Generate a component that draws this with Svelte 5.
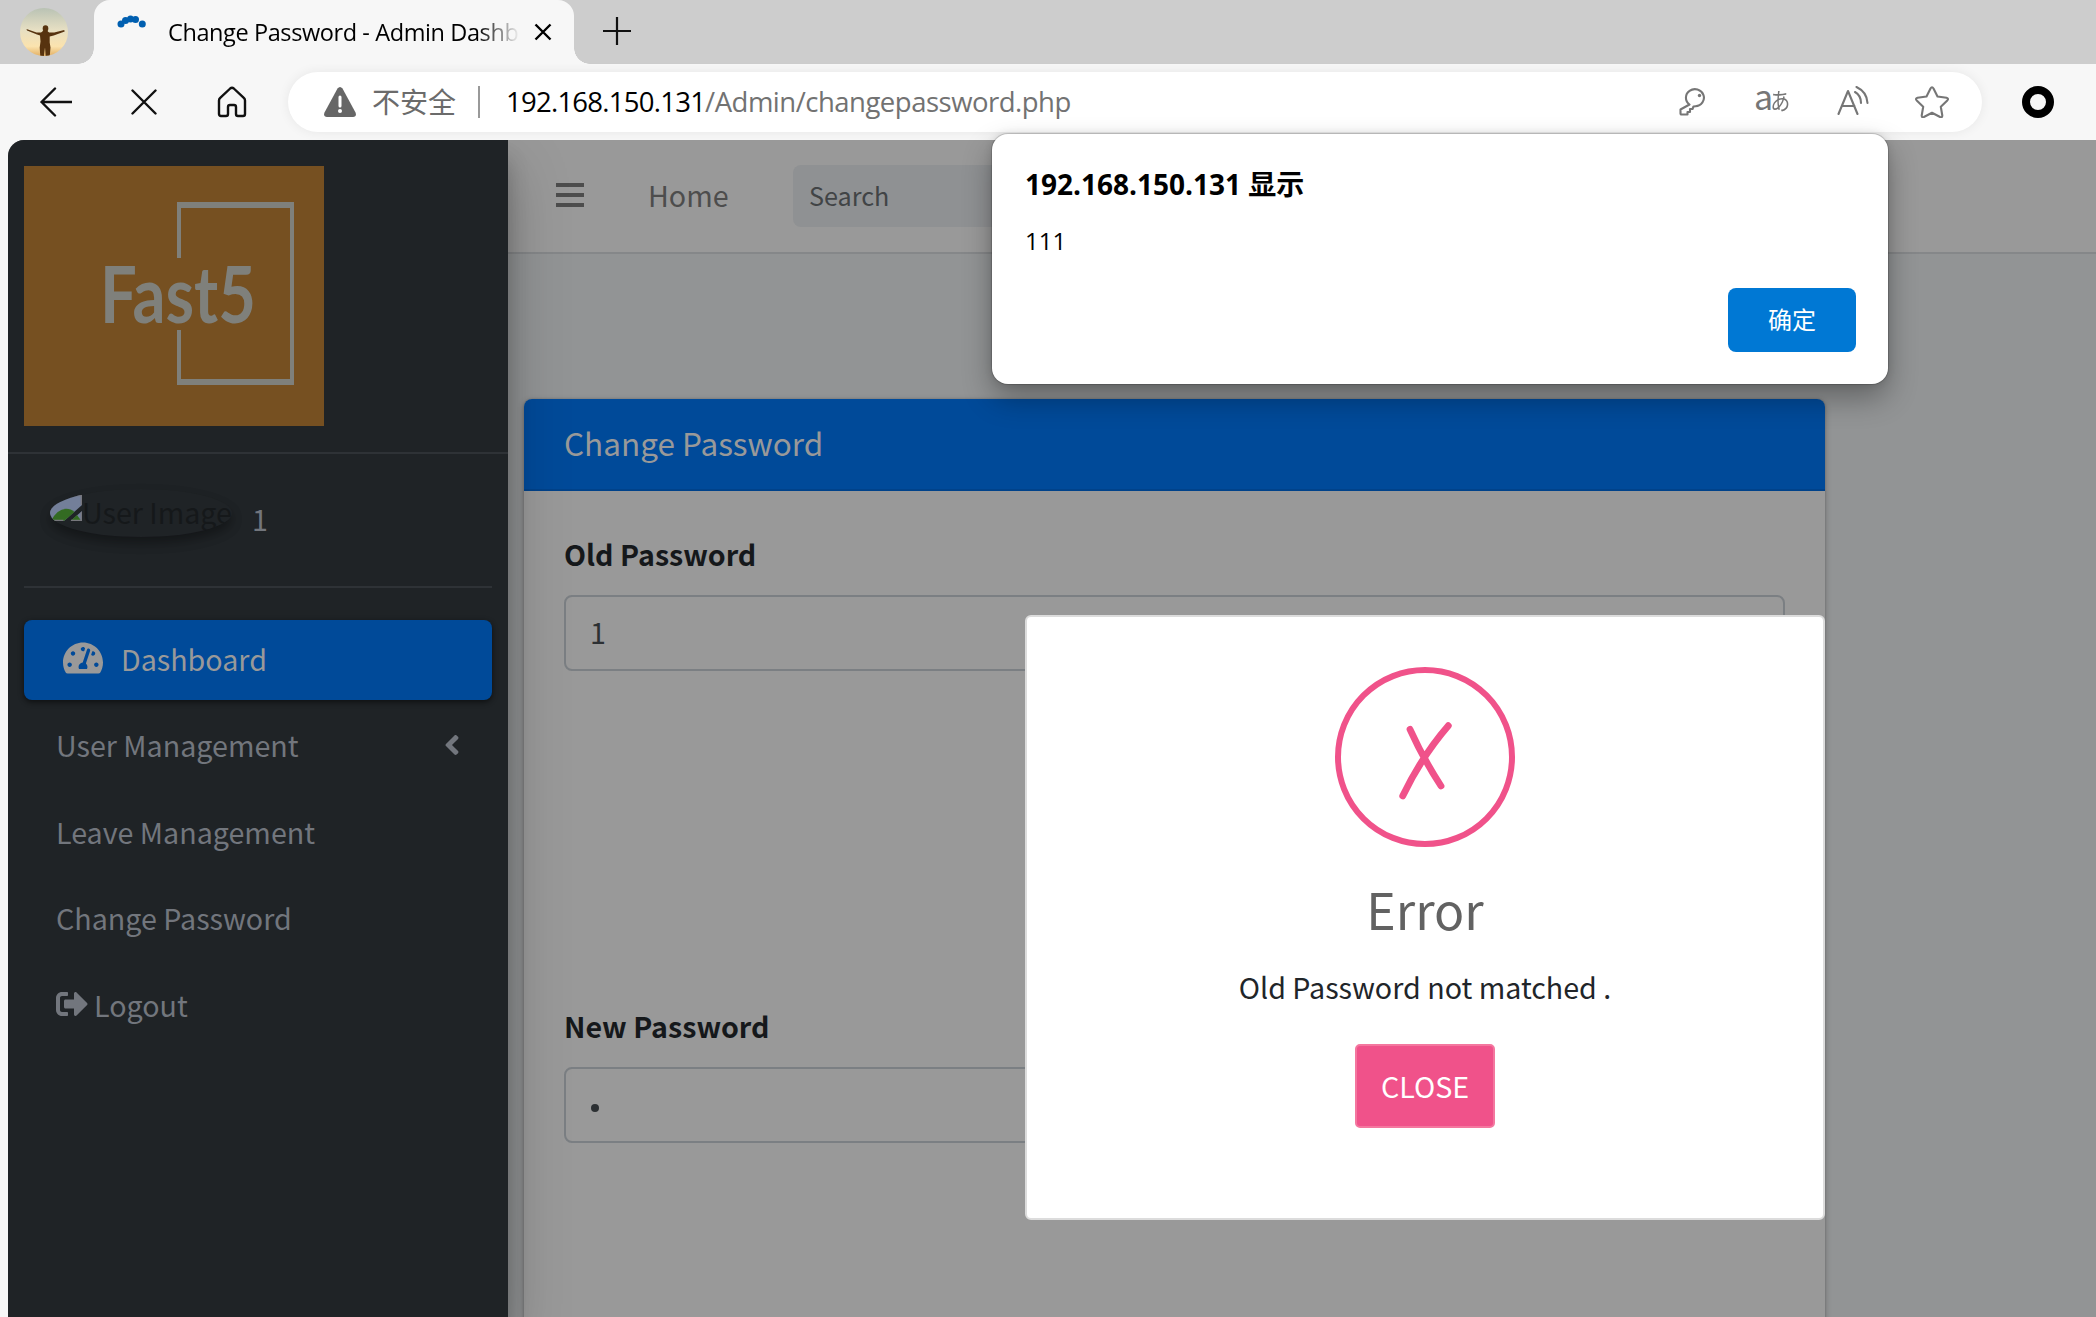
<script>
  const links = ['User Management', 'Leave Management', 'Change Password'];
  const spinner = [[7, 11], [11.5, 7.5], [16.5, 6], [21.5, 6.6], [28.3, 11]];
</script>

<div class="window">
  <header class="tabs">
    <svg class="avatar" viewBox="0 0 48 48">
      <defs>
        <linearGradient id="sky" x1="0" y1="0" x2="0" y2="1">
          <stop offset="0" stop-color="#b9c2b4" />
          <stop offset=".45" stop-color="#e6dfc3" />
          <stop offset=".8" stop-color="#fbe3ae" />
          <stop offset="1" stop-color="#e3b064" />
        </linearGradient>
        <clipPath id="round"><circle cx="24" cy="24" r="24" /></clipPath>
      </defs>
      <g clip-path="url(#round)">
        <rect width="48" height="48" fill="url(#sky)" />
        <path d="M6.500 21l10 3.500h4.500c1-.8 2-1.300 2.200-2.200h4c.2.900 1 1.400 2 2.200h5l10-2.500.5 1.500-11 4-4 1v6l.8 5-.8 9h-4l-.7-9-1.200 9h-3.500l-.6-9 .8-6-.5-6-3-1-10-4z" fill="#57330f" />
        <ellipse cx="25.500" cy="20.500" rx="2.800" ry="3.200" fill="#57330f" />
      </g>
    </svg>
    <div class="tab">
      <svg class="spin" viewBox="0 0 36 36">
        {#each spinner as [x, y]}<circle cx={x} cy={y} r="3.500" fill="#005fb0" />{/each}
      </svg>
      <span class="tab-title">Change Password - Admin Dashb</span>
      <svg class="tab-close" viewBox="0 0 18 18"><path d="M1.500 1.500l15 15M16.500 1.500l-15 15" /></svg>
    </div>
    <svg class="plus" viewBox="0 0 28 28"><path d="M14 0v28M0 14h28" /></svg>
  </header>

  <div class="toolbar">
    <svg class="tool back" viewBox="0 0 32 30"><path d="M32 15H1.500M15 1.500L1.500 15 15 28.500" /></svg>
    <svg class="tool stop" viewBox="0 0 26 26"><path d="M1.500 1.500l23 23M24.500 1.500l-23 23" /></svg>
    <svg class="tool house" viewBox="0 0 30 32"><path d="M2 14.500q0-1.500 1.200-2.600L13.200 2.500q1.800-1.600 3.600 0l10 9.400Q28 13 28 14.500V28q0 2-2 2h-5q-2 0-2-2v-7q0-2-2-2h-4q-2 0-2 2v7q0 2-2 2H4q-2 0-2-2z" /></svg>
    <div class="address">
      <svg class="warn" viewBox="0 0 32 30">
        <path d="M13.500 1.500q2.500-3 5 0l13 24q1.500 4-2.500 4.500H3q-4-.5-2.500-4.500z" fill="#666" />
        <path d="M16 10v9" stroke="#fff" stroke-width="3" stroke-linecap="round" />
        <circle cx="16" cy="24" r="2" fill="#fff" />
      </svg>
      <span class="insecure">不安全</span>
      <span class="bar"></span>
      <span class="url"><b>192.168.150.131</b>/Admin/changepassword.php</span>
      <svg class="key" viewBox="0 0 28 28"><path d="M10.500 16.500A9 8.500 0 1 1 16.500 18.200l-2 .3-1 2.500h-2.500v3H8.500v2.500H2.500q-1 0-1-1v-4z" /><circle cx="20.500" cy="7.500" r="1.700" class="dot" /></svg>
      <span class="translate"><span>a</span><span class="kana">あ</span></span>
      <svg class="read" viewBox="0 0 32 30"><path d="M1.500 28L11 5l9.500 23M5 20h12.500M18 6q6 3.500 6 11M19.500 1Q30 6 30.500 17" /></svg>
      <svg class="star" viewBox="0 0 34 32"><path d="M15.500 2.500q1.500-2.500 3 0l4 8 9 1.300q2.500.7.800 2.600l-6.500 6.300 1.500 8.800q0 2.300-2.200 1.500L17 26.800 8.900 31q-2.200.8-2.200-1.500l1.500-8.800-6.500-6.300q-1.700-1.900.8-2.600l9-1.300z" /></svg>
    </div>
    <span class="ring"></span>
  </div>

  <main class="page">
    <aside class="sidebar">
      <div class="brand">
        <svg class="logo" viewBox="0 0 300 260">
          <rect width="300" height="260" fill="#765021" />
          <path d="M153 92V36h117v183H153v-55h4v49h109V42H157v50z" fill="#7f807b" />
          <text x="76" y="157" textLength="156" lengthAdjust="spacingAndGlyphs">Fast5</text>
        </svg>
      </div>
      <div class="user">
        <div class="photo">
          <svg viewBox="0 0 32 32">
            <path d="M0 6h32v10L14 32H0z" fill="#737f99" />
            <path d="M1 32q6-12 15-12.300 5 0 8.500 3.300L14 32z" fill="#336b22" />
            <path d="M32 22v10H20.500z" fill="#737f99" />
            <path d="M27 26l4 5.500H21z" fill="#336b22" />
            <path d="M18 6.500h13.300V16M31.300 23v8.500H21M13.500 31.500H2" fill="none" stroke="#77777c" stroke-width="1.300" />
          </svg>
          <span>User Image</span>
        </div>
        <span class="name">1</span>
      </div>
      <nav>
        <a class="active" href="#dashboard">
          <svg class="tach" viewBox="0 0 576 512"><path d="M288 32C128.940 32 0 160.940 0 320c0 52.800 14.250 102.260 39.060 144.800 5.610 9.620 16.300 15.200 27.440 15.200h443c11.140 0 21.830-5.580 27.440-15.200C561.750 422.260 576 372.800 576 320c0-159.060-128.940-288-288-288zm0 64c14.710 0 26.580 10.130 30.320 23.650-1.110 2.260-2.640 4.230-3.450 6.670l-9.220 27.670c-5.130 3.490-10.970 6.010-17.640 6.010-17.670 0-32-14.330-32-32S270.330 96 288 96zM96 384c-17.670 0-32-14.330-32-32s14.330-32 32-32 32 14.330 32 32-14.330 32-32 32zm48-160c-17.670 0-32-14.330-32-32s14.330-32 32-32 32 14.330 32 32-14.330 32-32 32zm246.770-72.410l-61.330 184C343.130 347.330 352 364.540 352 384c0 11.720-3.380 22.550-8.880 32H232.880c-5.500-9.450-8.880-20.280-8.880-32 0-33.940 26.500-61.430 59.900-63.590l61.340-184.010c4.170-12.560 17.730-19.450 30.360-15.170 12.570 4.190 19.350 17.790 15.170 30.360zm14.660 57.200l15.520-46.550c3.470-1.290 7.130-2.230 11.050-2.230 17.670 0 32 14.330 32 32s-14.330 32-32 32c-11.380-.01-20.890-6.280-26.570-15.220zM480 384c-17.670 0-32-14.330-32-32s14.330-32 32-32 32 14.330 32 32-14.330 32-32 32z" /></svg>
          <span>Dashboard</span>
        </a>
        {#each links as label, i}
          <a href="#{i}">
            <span>{label}</span>
            {#if i === 0}
              <svg class="angle" viewBox="0 0 256 512"><path d="M31.700 239l136-136c9.400-9.400 24.600-9.400 33.900 0l22.600 22.600c9.400 9.400 9.400 24.600 0 33.900L127.900 256l96.400 96.400c9.400 9.400 9.400 24.600 0 33.900L201.700 409c-9.400 9.400-24.600 9.400-33.900 0l-136-136c-9.500-9.400-9.500-24.600-.1-34z" /></svg>
            {/if}
          </a>
        {/each}
        <a href="#logout">
          <svg class="exit" viewBox="0 0 512 512"><path d="M497 273L329 441c-15 15-41 4.500-41-17v-96H152c-13.300 0-24-10.700-24-24v-96c0-13.300 10.700-24 24-24h136V88c0-21.400 25.900-32 41-17l168 168c9.300 9.400 9.300 24.600 0 34zM192 436v-40c0-6.600-5.400-12-12-12H96c-17.700 0-32-14.300-32-32V160c0-17.700 14.300-32 32-32h84c6.600 0 12-5.400 12-12V76c0-6.600-5.400-12-12-12H96c-53 0-96 43-96 96v192c0 53 43 96 96 96h84c6.600 0 12-5.400 12-12z" /></svg>
          <span>Logout</span>
        </a>
      </nav>
    </aside>

    <section class="content">
      <div class="topnav">
        <span class="burger"><i></i><i></i><i></i></span>
        <span class="home">Home</span>
        <span class="search">Search</span>
      </div>
      <div class="card">
        <div class="card-head">Change Password</div>
        <div class="card-body">
          <div class="field">
            <label for="old">Old Password</label>
            <div class="input" id="old"><span>1</span></div>
          </div>
          <div class="field">
            <label for="new">New Password</label>
            <div class="input" id="new"><span class="bullet"></span></div>
          </div>
        </div>
      </div>
    </section>
  </main>

  <div class="error">
    <svg class="cross" viewBox="0 0 180 180">
      <circle cx="90" cy="90" r="87" />
      <path d="M75 62.300Q89 93 106 119M113.300 58.700Q87 89 67.700 129" />
    </svg>
    <h2>Error</h2>
    <p>Old Password not matched .</p>
    <button>CLOSE</button>
  </div>

  <div class="alert">
    <strong>192.168.150.131 显示</strong>
    <span class="msg">111</span>
    <button>确定</button>
  </div>
</div>

<style>
  :global(body) { margin: 0; }
  * { box-sizing: border-box; }
  svg { display: block; flex: none; }
  .window {
    position: relative;
    width: 2096px;
    height: 1317px;
    overflow: hidden;
    display: flex;
    flex-direction: column;
    background: #f7f7f7;
    font-family: "Noto Sans CJK SC", sans-serif;
  }
  .tabs { height: 64px; flex: none; display: flex; align-items: center; background: #cdcdcd; }
  .avatar { width: 48px; height: 48px; margin: 0 26px 0 20px; }
  .tab {
    position: relative;
    width: 480px;
    height: 64px;
    display: flex;
    align-items: center;
    background: #f7f7f7;
    border-radius: 16px 16px 0 0;
    font: 24px/36px "Open Sans", sans-serif;
  }
  .tab::before, .tab::after {
    content: "";
    position: absolute;
    bottom: 0;
    width: 16px;
    height: 16px;
  }
  .tab::before { left: -16px; background: radial-gradient(circle at 0 0, transparent 15.500px, #f7f7f7 16px); }
  .tab::after { right: -16px; background: radial-gradient(circle at 100% 0, transparent 15.500px, #f7f7f7 16px); }
  .spin { width: 36px; height: 36px; margin: 0 18px 0 20px; align-self: flex-start; margin-top: 13px; }
  .tab-title {
    width: 352px;
    white-space: nowrap;
    font-size: 23.500px;
    letter-spacing: -.4px;
    -webkit-mask-image: linear-gradient(90deg, #000 310px, transparent 352px);
    mask-image: linear-gradient(90deg, #000 310px, transparent 352px);
  }
  .tab-close { width: 18px; height: 18px; margin-left: 14px; stroke: #000; stroke-width: 2.400; }
  .plus { width: 28px; height: 28px; margin: 0 0 2px 29px; stroke: #111; stroke-width: 2.200; }
  .toolbar { height: 76px; flex: none; display: flex; align-items: center; }
  .tool { fill: none; stroke: #111; stroke-width: 2.400; stroke-linecap: round; stroke-linejoin: round; }
  .back { width: 32px; height: 30px; margin-left: 40px; }
  .stop { width: 26px; height: 26px; margin-left: 59px; }
  .house { width: 30px; height: 32px; margin-left: 60px; }
  .address {
    width: 1694px;
    height: 60px;
    margin-left: 41px;
    display: flex;
    align-items: center;
    border-radius: 30px;
    background: #fff;
    box-shadow: 0 0 12px rgba(0, 0, 0, .07);
    color: #6b6b6b;
  }
  .warn { width: 32px; height: 30px; margin-left: 36px; }
  .insecure { width: 86px; margin: 0 20px 2px 16px; font-size: 28px; line-height: 40px; }
  .bar { width: 2px; height: 32px; background: #999; }
  .url { width: 1173px; padding-left: 26px; font: 27.500px/40px "Open Sans", sans-serif; letter-spacing: -.5px; white-space: nowrap; color: #727272; }
  .url b { font-weight: 400; color: #000; letter-spacing: -.75px; }
  .key, .read, .star { fill: none; stroke: #767676; stroke-width: 2.100; stroke-linejoin: round; stroke-linecap: round; }
  .key { width: 28px; height: 28px; margin-left: 26px; }
  .key .dot { fill: #767676; stroke: none; }
  .translate { width: 36px; margin-left: 47px; margin-right: 1px; display: flex; align-items: baseline; font-size: 34px; line-height: 30px; padding-bottom: 6px; color: #767676; }
  .translate .kana { font-size: 20px; margin-left: -3px; transform: scaleY(1.200); transform-origin: 50% 75%; }
  .read { width: 32px; height: 30px; margin-left: 46px; margin-bottom: 3px; }
  .star { width: 34px; height: 32px; margin-left: 46px; }
  .ring { width: 32px; height: 32px; margin-left: 40px; border: 8px solid #000; border-radius: 50%; }

  .page {
    flex: 1;
    min-height: 0;
    margin-left: 8px;
    display: flex;
    overflow: hidden;
    border-radius: 16px 0 0 0;
    background: #929495;
    font-size: 28.650px;
  }
  .sidebar {
    position: relative;
    z-index: 1;
    width: 500px;
    flex: none;
    background: #1f2326;
    color: #72767d;
    box-shadow: 0 28px 56px rgba(0, 0, 0, .25), 0 20px 20px rgba(0, 0, 0, .2);
  }
  .brand { height: 314px; padding: 26px 16px 0; border-bottom: 2px solid #2e3236; }
  .logo { width: 300px; height: 260px; }
  .logo text { font: 700 78px Lato, sans-serif; fill: #7f807b; }
  .user { height: 134px; margin: 0 16px; padding: 35px 0 0 26px; display: flex; border-bottom: 2px solid #2e3236; }
  .photo {
    width: 182px;
    height: 48px;
    display: flex;
    overflow: hidden;
    border-radius: 50%;
    background: #1f2326;
    box-shadow: 0 6px 12px rgba(0, 0, 0, .18), 0 6px 12px rgba(0, 0, 0, .22);
    color: #15181a;
    line-height: 46px;
    white-space: nowrap;
  }
  .photo svg { width: 32px; height: 32px; }
  .name { margin-left: 20px; line-height: 59px; }
  nav { padding: 32px 16px 0; display: flex; flex-direction: column; gap: 6.400px; }
  nav a {
    height: 80px;
    padding: 0 32px 3px;
    display: flex;
    align-items: center;
    border-radius: 8px;
    color: #72767d;
    text-decoration: none;
    white-space: nowrap;
  }
  nav svg { fill: currentColor; }
  nav .active { padding-left: 39px; padding-bottom: 4px; background: #004a99; color: #999; box-shadow: 0 2px 6px rgba(0, 0, 0, .3), 0 2px 4px rgba(0, 0, 0, .3); }
  .tach { width: 40px; height: 36px; margin-right: 18px; }
  .angle { width: 16px; height: 32px; margin-left: auto; }
  .exit { width: 32px; height: 32px; margin-right: 6px; }

  .content { flex: 1; min-width: 0; }
  .topnav { height: 114px; display: flex; align-items: center; background: #999; border-bottom: 2px solid #858789; color: #4d4d4d; }
  .burger { width: 28px; margin: 0 0 2px 48px; display: flex; flex-direction: column; gap: 6px; }
  .burger i { height: 4px; background: #4d4d4d; }
  .home { width: 145px; margin-left: 64px; padding-bottom: 3px; }
  .search { width: 500px; height: 62px; padding-left: 16px; border-radius: 8px; background: #8f9193; color: #414446; font-size: 25.200px; line-height: 60px; }
  .card { width: 1301px; height: 1000px; margin: 145px 0 0 16px; border-radius: 8px; background: #999; box-shadow: 0 0 2px rgba(0, 0, 0, .2), 0 2px 6px rgba(0, 0, 0, .25); }
  .card-head { height: 92px; padding: 0 40px; border-bottom: 2px solid #00428a; border-radius: 8px 8px 0 0; background: #004a99; color: #999; font-size: 31.500px; line-height: 86px; }
  .card-body { padding: 40px; color: #15181b; }
  .field { height: 472px; }
  .field label { display: block; height: 64px; font-weight: 700; line-height: 46px; }
  .input { height: 76px; padding: 0 24px; border: 2px solid #7b7f83; border-radius: 8px; display: flex; align-items: center; color: #2c3033; line-height: 70px; }
  .input span { margin-top: -2px; }
  .input .bullet { width: 8px; height: 8px; margin: 5px 0 0 1px; border-radius: 50%; background: #2c3033; }

  .error {
    position: absolute;
    left: 1025px;
    top: 615px;
    width: 800px;
    height: 605px;
    padding-top: 50px;
    display: flex;
    flex-direction: column;
    align-items: center;
    border: 2px solid #dcdcdc;
    border-radius: 6px;
    background: #fff;
    font-size: 28.650px;
  }
  .cross { width: 180px; height: 180px; fill: none; stroke: #f0528a; stroke-width: 6; stroke-linecap: round; }
  .cross path { stroke-width: 6.800; }
  h2 { margin: 25px 0 0; font-size: 50px; font-weight: 400; line-height: 72px; color: #626262; }
  p { margin: 19px 0 0; line-height: 48px; color: #212529; }
  .error button {
    width: 140px;
    height: 84px;
    margin-top: 33px;
    padding: 0 0 2px;
    border: 2px solid #f4779f;
    border-radius: 5px;
    background: #f0528a;
    color: #fff;
    font: inherit;
  }
  .alert {
    position: absolute;
    left: 992px;
    top: 134px;
    width: 896px;
    height: 250px;
    padding: 32px 32px;
    display: flex;
    flex-direction: column;
    border-radius: 16px;
    background: #fff;
    box-shadow: 0 0 0 1px rgba(0, 0, 0, .14), 0 14px 30px rgba(0, 0, 0, .32), 0 0 8px rgba(0, 0, 0, .12);
    font-family: "Open Sans", "Noto Sans CJK SC", sans-serif;
    color: #000;
  }
  .alert strong { margin-left: 1px; font-size: 28px; line-height: 36px; }
  .alert .msg { margin: 22px 0 0 1px; font-size: 24px; line-height: 34px; }
  .alert button { align-self: flex-end; width: 128px; height: 64px; margin-top: 30px; padding: 0 0 3px; border: 0; border-radius: 8px; background: #0078d4; color: #fff; font: 24px "Noto Sans CJK SC", sans-serif; }
</style>
